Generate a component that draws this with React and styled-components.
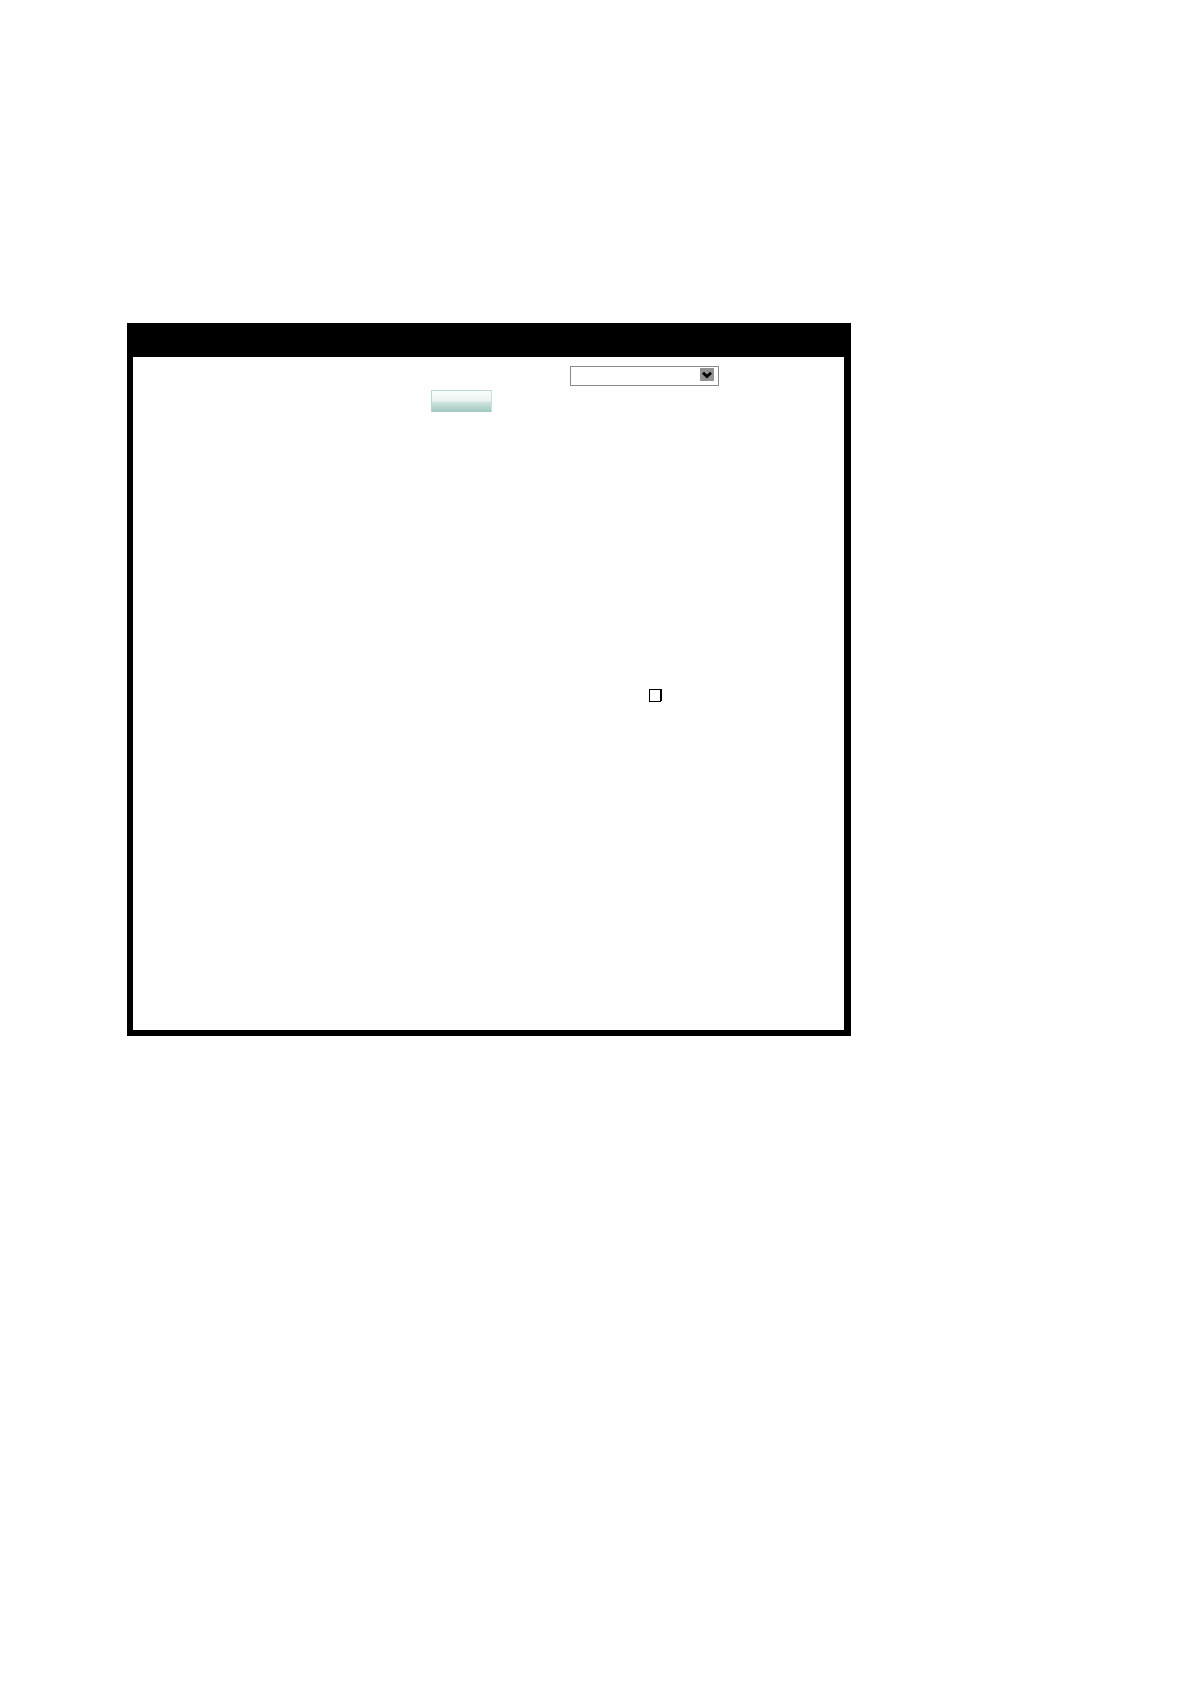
import React, {useState} from "react";
import styled, {createGlobalStyle} from "styled-components";

const GlobalStyle = createGlobalStyle`
  * {
    box-sizing: border-box;
  }
  body {
    margin: 0;
    background: #fff;
    font-family: "Liberation Sans", Arial, sans-serif;
  }
`;

const Page = styled.div`
  padding: 323px 339px 0 127px;
`;

const Panel = styled.form`
  border: solid #000;
  border-width: 0 7px 6px 6px;
  background: #fefefe;
`;

const TitleBar = styled.header`
  height: 34px;
  background: #000;
`;

const Fields = styled.div`
  display: flex;
  flex-direction: column;
  gap: 4px;
  padding: 9px 0 328px;
`;

const Row = styled.div`
  display: flex;
  justify-content: flex-end;
  padding-right: ${({ $inset }) => $inset};
`;

const OptionRow = styled(Row)`
  padding-top: 273px;
`;

const SelectWrap = styled.div`
  position: relative;
  width: 149px;
  height: 20px;
  svg {
    position: absolute;
    top: 2px;
    right: 5px;
    pointer-events: none;
  }
`;

const Select = styled.select`
  display: block;
  appearance: none;
  width: 100%;
  height: 100%;
  padding: 0 20px 0 4px;
  border: 1px solid #8a8a8a;
  border-radius: 0;
  background: #fff;
  font: inherit;
  font-size: 12px;
`;

const Button = styled.button`
  width: 61px;
  height: 22px;
  padding: 0;
  border: 1px solid #b5d8d1;
  border-right-color: #c9e2dd;
  border-bottom-color: #a3cac1;
  border-radius: 1px;
  background: linear-gradient(#fbfefd 0%, #eaf3f1 50%, #cfe4df 56%, #a3cac1 100%);
  cursor: pointer;
`;

/* the right edge is drawn twice as thick as the others */
const Checkbox = styled.input`
  appearance: none;
  width: 12px;
  height: 13px;
  margin: 0 1px 0 0;
  border: 1px solid #000;
  background: #fff;
  box-shadow: 1px -1px 0 #000;
  clip-path: inset(0 -1px 0 0);
  &:checked {
    background: #000;
  }
`;

const Arrow = () => (
    <svg width="14" height="13" viewBox="0 0 14 13" aria-hidden="true">
        <rect width="14" height="13" fill="#929292" />
        <path d="M3 4.8L7 8.6L11 4.8" fill="none" stroke="#000" strokeWidth="2.8" />
    </svg>
)

const App = () => {

    const [checked, setChecked] = useState(false);

    return (
        <>
            <GlobalStyle />
            <Page>
                <Panel onSubmit={(event) => event.preventDefault()}>
                    <TitleBar />
                    <Fields>
                        <Row $inset="125px">
                            <SelectWrap>
                                <Select aria-label="Selection" name="selection">
                                    <option value=""></option>
                                </Select>
                                <Arrow />
                            </SelectWrap>
                        </Row>
                        <Row $inset="352px">
                            <Button type="submit" aria-label="Submit" />
                        </Row>
                        <OptionRow $inset="182px">
                            <Checkbox
                                type="checkbox"
                                name="option"
                                aria-label="Option"
                                checked={checked}
                                onChange={(event) => setChecked(event.target.checked)}
                            />
                        </OptionRow>
                    </Fields>
                </Panel>
            </Page>
        </>
    )
}

export default App
